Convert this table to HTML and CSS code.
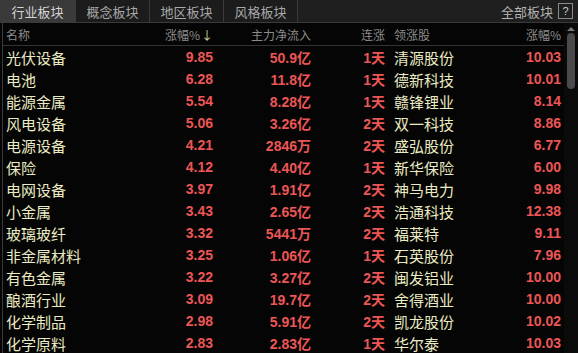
FILE: index.html
```html
<!DOCTYPE html>
<html lang="zh">
<head>
<meta charset="utf-8">
<link rel="stylesheet" href="styles.css">
</head>
<body>
<div class="panel">
  <div class="tabbar">
    <div class="tab active">行业板块</div>
    <div class="tab">概念板块</div>
    <div class="tab">地区板块</div>
    <div class="tab">风格板块</div>
    <div class="spacer"></div>
    <div class="all">全部板块</div>
    <div class="help">?</div>
  </div>
  <div class="body">
    <div class="table">
      <div class="row head">
        <div class="c name">名称</div>
        <div class="c num">涨幅%<span class="arrow">↓</span></div>
        <div class="c num">主力净流入</div>
        <div class="c num">连涨</div>
        <div class="c lead">领涨股</div>
        <div class="c num">涨幅%</div>
      </div>
      <div class="row"><div class="c name">光伏设备</div><div class="c num red">9.85</div><div class="c num red">50.9亿</div><div class="c num red">1天</div><div class="c lead">清源股份</div><div class="c num red">10.03</div></div>
      <div class="row"><div class="c name">电池</div><div class="c num red">6.28</div><div class="c num red">11.8亿</div><div class="c num red">1天</div><div class="c lead">德新科技</div><div class="c num red">10.01</div></div>
      <div class="row"><div class="c name">能源金属</div><div class="c num red">5.54</div><div class="c num red">8.28亿</div><div class="c num red">1天</div><div class="c lead">赣锋锂业</div><div class="c num red">8.14</div></div>
      <div class="row"><div class="c name">风电设备</div><div class="c num red">5.06</div><div class="c num red">3.26亿</div><div class="c num red">2天</div><div class="c lead">双一科技</div><div class="c num red">8.86</div></div>
      <div class="row"><div class="c name">电源设备</div><div class="c num red">4.21</div><div class="c num red">2846万</div><div class="c num red">2天</div><div class="c lead">盛弘股份</div><div class="c num red">6.77</div></div>
      <div class="row"><div class="c name">保险</div><div class="c num red">4.12</div><div class="c num red">4.40亿</div><div class="c num red">1天</div><div class="c lead">新华保险</div><div class="c num red">6.00</div></div>
      <div class="row"><div class="c name">电网设备</div><div class="c num red">3.97</div><div class="c num red">1.91亿</div><div class="c num red">2天</div><div class="c lead">神马电力</div><div class="c num red">9.98</div></div>
      <div class="row"><div class="c name">小金属</div><div class="c num red">3.43</div><div class="c num red">2.65亿</div><div class="c num red">2天</div><div class="c lead">浩通科技</div><div class="c num red">12.38</div></div>
      <div class="row"><div class="c name">玻璃玻纤</div><div class="c num red">3.32</div><div class="c num red">5441万</div><div class="c num red">2天</div><div class="c lead">福莱特</div><div class="c num red">9.11</div></div>
      <div class="row"><div class="c name">非金属材料</div><div class="c num red">3.25</div><div class="c num red">1.06亿</div><div class="c num red">1天</div><div class="c lead">石英股份</div><div class="c num red">7.96</div></div>
      <div class="row"><div class="c name">有色金属</div><div class="c num red">3.22</div><div class="c num red">3.27亿</div><div class="c num red">2天</div><div class="c lead">闽发铝业</div><div class="c num red">10.00</div></div>
      <div class="row"><div class="c name">酿酒行业</div><div class="c num red">3.09</div><div class="c num red">19.7亿</div><div class="c num red">2天</div><div class="c lead">舍得酒业</div><div class="c num red">10.00</div></div>
      <div class="row"><div class="c name">化学制品</div><div class="c num red">2.98</div><div class="c num red">5.91亿</div><div class="c num red">2天</div><div class="c lead">凯龙股份</div><div class="c num red">10.02</div></div>
      <div class="row"><div class="c name">化学原料</div><div class="c num red">2.83</div><div class="c num red">2.83亿</div><div class="c num red">1天</div><div class="c lead">华尔泰</div><div class="c num red">10.03</div></div>
    </div>
    <div class="scroll">
      <div class="up"></div>
      <div class="thumb"></div>
    </div>
  </div>
</div>
</body>
</html>
```

FILE: styles.css
```css
html, body {
  margin: 0;
  padding: 0;
  background: #050505;
  overflow: hidden;
}
body {
  width: 578px;
  height: 353px;
  font-family: "Noto Sans CJK SC", "Liberation Sans", sans-serif;
}
.panel {
  display: flex;
  flex-direction: column;
  height: 353px;
}
.tabbar {
  height: 23px;
  display: flex;
  align-items: stretch;
  background: #1f1f1f;
  border-bottom: 1px solid #3a3a3a;
  box-sizing: border-box;
}
.tab {
  width: 73px;
  display: flex;
  align-items: center;
  justify-content: center;
  color: #a8a8a8;
  font-size: 13px;
  background: #1c1c1c;
  border-right: 1px solid #3a3a3a;
}
.tab.active {
  background: #3a3a3a;
  color: #d4d4d4;
  width: 75px;
}
.spacer { flex: 1; }
.all {
  display: flex;
  align-items: center;
  color: #b4b4b4;
  font-size: 13px;
  margin-right: 5px;
}
.help {
  align-self: center;
  width: 13px;
  height: 14px;
  border: 1px solid #8a8a8a;
  color: #cfcfcf;
  font-size: 11px;
  line-height: 14px;
  text-align: center;
  margin-right: 5px;
  font-family: "Liberation Sans", sans-serif;
}
.body {
  flex: 1;
  display: flex;
  border-left: 1px solid #3a3a3a;
  margin-left: 2px;
  overflow: hidden;
}
.table {
  flex: 1;
}
.row {
  display: grid;
  grid-template-columns: 144px 63px 98px 74px 115px 61px;
  height: 22px;
  align-items: center;
  padding-left: 3px;
}
.row.head {
  height: 22px;
  border-bottom: 1px solid #333;
  color: #8c8c8c;
  font-size: 12px;
}
.c { white-space: nowrap; }
.num { text-align: right; }
.lead { padding-left: 9px; }
.row:not(.head) .name,
.row:not(.head) .lead {
  color: #ebebc3;
  font-size: 15px;
}
.red {
  color: #ec5656;
  font-weight: bold;
  font-size: 14px;
  font-family: "Liberation Sans", "Noto Sans CJK SC", sans-serif;
}
.arrow {
  color: #d8d8a0;
  font-size: 12px;
  margin-left: 1px;
}
.scroll {
  width: 14px;
  background: #0a0a0a;
  display: flex;
  flex-direction: column;
  align-items: center;
  padding-top: 4px;
}
.up {
  width: 0;
  height: 0;
  border-left: 4px solid transparent;
  border-right: 4px solid transparent;
  border-bottom: 4px solid #777;
}
.thumb {
  margin-top: 2px;
  width: 8px;
  height: 56px;
  border-radius: 4px;
  background: #4a4a4a;
}
```
